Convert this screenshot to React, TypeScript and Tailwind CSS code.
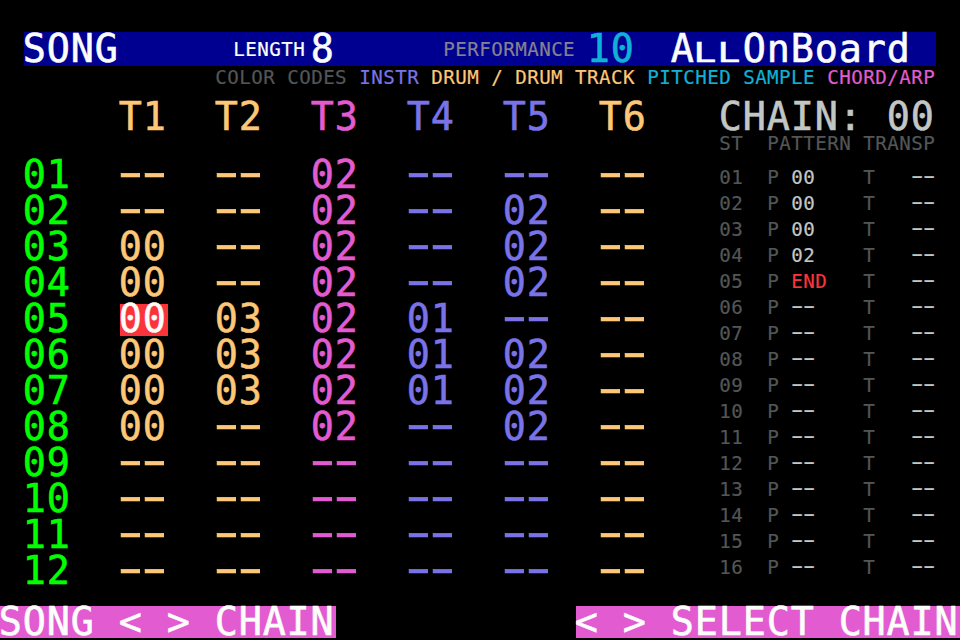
import React from "react";

const ORANGE = "text-[#fcc777]";
const PINK = "text-[#e25bd1]";
const VIOLET = "text-[#7a73e8]";

// Two text sizes of the tracker: a 24px cell and a 12px cell per character.
const BIG = "text-[38.4px] tracking-[0.88px] -indent-[1.3px] whitespace-pre [-webkit-text-stroke:0.6px]";
const SMALL = "text-[19.2px] tracking-[0.44px] -indent-[0.8px] whitespace-pre [-webkit-text-stroke:0.2px]";

const tracks = [
  { name: "T1", color: ORANGE },
  { name: "T2", color: ORANGE },
  { name: "T3", color: PINK },
  { name: "T4", color: VIOLET },
  { name: "T5", color: VIOLET },
  { name: "T6", color: ORANGE },
];

const song = [
  ["--", "--", "02", "--", "--", "--"],
  ["--", "--", "02", "--", "02", "--"],
  ["00", "--", "02", "--", "02", "--"],
  ["00", "--", "02", "--", "02", "--"],
  ["00", "03", "02", "01", "--", "--"],
  ["00", "03", "02", "01", "02", "--"],
  ["00", "03", "02", "01", "02", "--"],
  ["00", "--", "02", "--", "02", "--"],
  ["--", "--", "--", "--", "--", "--"],
  ["--", "--", "--", "--", "--", "--"],
  ["--", "--", "--", "--", "--", "--"],
  ["--", "--", "--", "--", "--", "--"],
];

const chain = ["00", "00", "00", "02", "END", "--", "--", "--", "--", "--", "--", "--", "--", "--", "--", "--"];

const pad = (n: number) => String(n).padStart(2, "0");

function Value({ text, small = false }: { text: string; small?: boolean }) {
  if (text !== "--") return <>{text}</>;
  // Empty slots use two hyphens widened to the full character cell.
  const dashes = small
    ? "block w-6 origin-left -translate-x-[5.6px] -translate-y-[2px] scale-x-[1.85] scale-y-[1.2] tracking-[-5.07px]"
    : "block w-12 origin-left -translate-x-[11px] -translate-y-[3px] scale-x-[1.85] scale-y-[1.15] tracking-[-10.15px]";
  return <span className={`indent-0 ${dashes}`}>--</span>;
}

export default function App() {
  return (
    <div className="flex h-[640px] w-[960px] flex-col overflow-hidden bg-black pt-8 font-['DejaVu_Sans_Mono',monospace]">
      <header className={`mx-6 grid h-[34px] shrink-0 grid-cols-[210px_78px_132px_144px_84px_1fr] bg-[#000090] leading-[34px] text-[#fbfdfb] ${BIG}`}>
        <span>SONG</span>
        <span className={`pt-[1px] ${SMALL}`}>LENGTH</span>
        <span>8</span>
        <span className={`pt-[1px] text-[#85818f] ${SMALL}`}>PERFORMANCE</span>
        <span className="text-[#10b1d7]">10</span>
        <span className="flex">
          <span className="w-6">A</span>
          <span className="w-12 origin-left -translate-x-[1px] translate-y-[4px] scale-x-[1.4] text-[27.4px] tracking-[0.64px]">LL</span>
          <span>OnBoard</span>
        </span>
      </header>

      <div className={`mx-6 flex h-6 shrink-0 justify-end leading-6 ${SMALL}`}>
        <span className="w-[144px] text-[#535656]">COLOR CODES</span>
        <span className={`w-[72px] ${VIOLET}`}>INSTR</span>
        <span className={`w-[216px] ${ORANGE}`}>DRUM / DRUM TRACK</span>
        <span className="w-[180px] text-[#10b1d7]">PITCHED SAMPLE</span>
        <span className={`w-[108px] ${PINK}`}>CHORD/ARP</span>
      </div>

      <main className="mx-6 flex h-[516px] shrink-0">
        <section className={`w-[696px] pt-[9px] ${BIG}`}>
          <div className="mb-[22px] flex h-9 pl-24 leading-9">
            {tracks.map((t) => (
              <span key={t.name} className={`w-24 ${t.color}`}>{t.name}</span>
            ))}
          </div>
          {song.map((row, r) => (
            <div key={r} className="flex h-9 leading-9">
              <span className="w-24 text-[#00ff00]">{pad(r + 1)}</span>
              {row.map((v, c) => (
                <span key={c} className={`w-24 ${tracks[c].color}`}>
                  {r === 4 && c === 0 ? (
                    <span className="mt-[3px] block h-8 w-12 bg-[#fb343b] leading-[30px] text-[#fbfdfb]">{v}</span>
                  ) : (
                    <Value text={v} />
                  )}
                </span>
              ))}
            </div>
          ))}
        </section>

        <section className="w-[216px] pt-[9px]">
          <div className={`flex h-[35px] justify-between leading-9 text-[#c2c6c4] ${BIG}`}>
            <span>CHAIN:</span>
            <span className="w-12">00</span>
          </div>
          <div className={`mb-[11px] flex h-5 leading-5 text-[#535656] ${SMALL}`}>
            <span className="w-12">ST</span>
            <span className="w-24">PATTERN</span>
            <span className="w-[72px]">TRANSP</span>
          </div>
          {chain.map((v, i) => (
            <div key={i} className={`flex h-[26px] leading-[26px] text-[#535656] ${SMALL}`}>
              <span className="w-12">{pad(i + 1)}</span>
              <span className="w-6">P</span>
              <span className={`w-[72px] ${v === "END" ? "text-[#fb343b]" : "text-[#c2c6c4]"}`}>
                <Value text={v} small />
              </span>
              <span className="w-12">T</span>
              <span className="w-6 text-[#c2c6c4]"><Value text="--" small /></span>
            </div>
          ))}
        </section>
      </main>

      <footer className={`flex h-8 shrink-0 justify-between leading-8 text-[#fbfdfb] ${BIG}`}>
        <span className="w-[336px] bg-[#e25bd1]">{"SONG < > CHAIN"}</span>
        <span className="w-[384px] bg-[#e25bd1]">{"< > SELECT CHAIN"}</span>
      </footer>
    </div>
  );
}
